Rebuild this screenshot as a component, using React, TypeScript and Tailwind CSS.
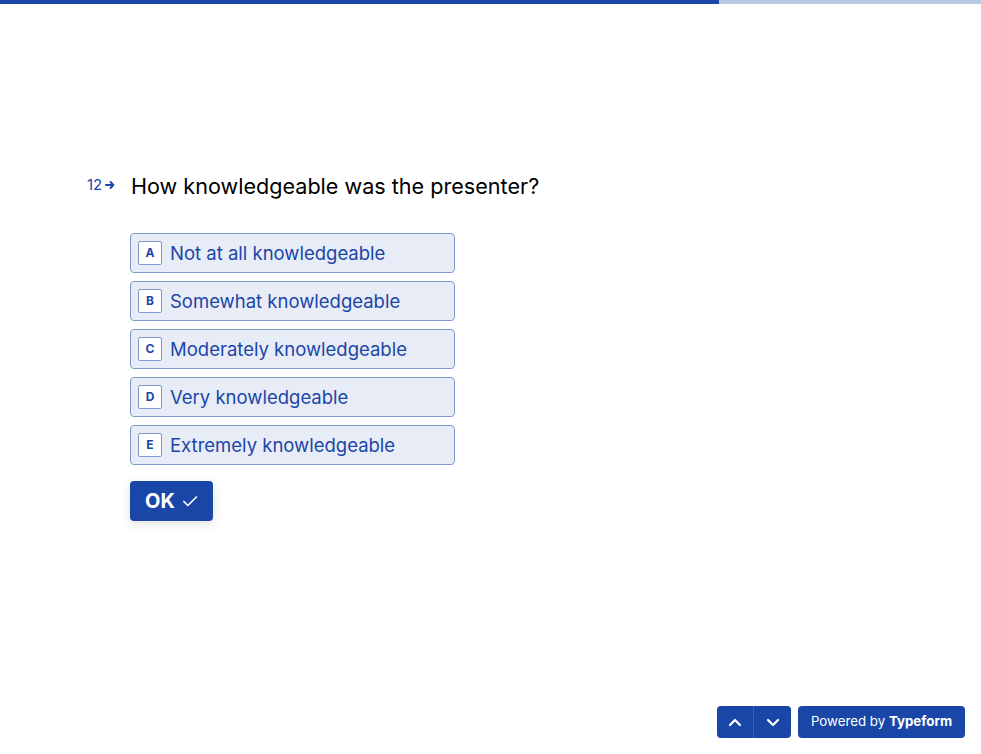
import React from "react";

const choices = [
  ["A", "Not at all knowledgeable"],
  ["B", "Somewhat knowledgeable"],
  ["C", "Moderately knowledgeable"],
  ["D", "Very knowledgeable"],
  ["E", "Extremely knowledgeable"],
];

export default function App() {
  return (
    <div className="relative w-[981px] h-[754px] bg-white overflow-hidden" style={{ fontFamily: "Inter, 'Noto Sans', sans-serif" }}>
      <div className="flex h-[4px] w-full bg-[#bac8e6]">
        <div className="w-[719px] h-full bg-[#1a46a8]" />
      </div>
      <div className="pt-[164px] pl-[87px]">
        <div className="flex items-start">
          <div className="w-[44px] flex items-center gap-[2px] pt-[8px] text-[#1a46a8] text-[15px] leading-[18px]">
            <span>12</span>
            <svg width="12" height="12" viewBox="0 0 12 12" fill="none" stroke="#1a46a8" strokeWidth="1.8" strokeLinecap="round" strokeLinejoin="round">
              <path d="M2 6h7.5M6.5 3l3 3-3 3" />
            </svg>
          </div>
          <div>
            <h1 className="text-[21.6px] leading-[36px] text-black font-normal">How knowledgeable was the presenter?</h1>
            <div className="mt-[29px] flex flex-col gap-[8px] w-[324px]">
              {choices.map(([k, t]) => (
                <div key={k} className="flex items-center h-[40px] rounded-[4px] border border-[#7f98cf] bg-[#e8ecf6] pl-[7px] ml-[-1px]">
                  <div className="w-[24px] h-[24px] flex items-center justify-center bg-white border border-[#7f98cf] rounded-[2px] text-[12px] font-bold text-[#1a46a8]">{k}</div>
                  <span className="ml-[8px] pt-[2px] text-[18.5px] text-[#1a46a8]">{t}</span>
                </div>
              ))}
            </div>
            <button className="mt-[16px] ml-[-1px] flex items-center gap-[7px] h-[40px] w-[83px] px-[15px] rounded-[4px] bg-[#1a46a8] text-white text-[20px] font-bold shadow-[0_3px_12px_rgba(0,0,0,0.12)]">
              <span>OK</span>
              <svg width="18" height="14" viewBox="0 0 18 14" fill="none" stroke="white" strokeWidth="1.8" strokeLinecap="round" strokeLinejoin="round">
                <path d="M2 7.5l4.5 4.5L16 2.5" />
              </svg>
            </button>
          </div>
        </div>
      </div>
      <div className="absolute right-[16px] bottom-[16px] flex gap-[7px]">
        <div className="flex h-[32px] rounded-[4px] bg-[#1a46a8] overflow-hidden ml-[-1px]">
          <div className="w-[37px] flex items-center justify-center border-r border-[#3a5fb6]">
            <svg width="14" height="9" viewBox="0 0 14 9" fill="none" stroke="white" strokeWidth="2.2" strokeLinecap="round" strokeLinejoin="round"><path d="M2 7l5-5 5 5" /></svg>
          </div>
          <div className="w-[37px] flex items-center justify-center">
            <svg width="14" height="9" viewBox="0 0 14 9" fill="none" stroke="white" strokeWidth="2.2" strokeLinecap="round" strokeLinejoin="round"><path d="M2 2l5 5 5-5" /></svg>
          </div>
        </div>
        <div className="h-[32px] w-[167px] flex items-center justify-center rounded-[4px] bg-[#1a46a8] text-white text-[13.3px]">
          <span>Powered by&nbsp;</span><span className="font-bold">Typeform</span>
        </div>
      </div>
    </div>
  );
}
